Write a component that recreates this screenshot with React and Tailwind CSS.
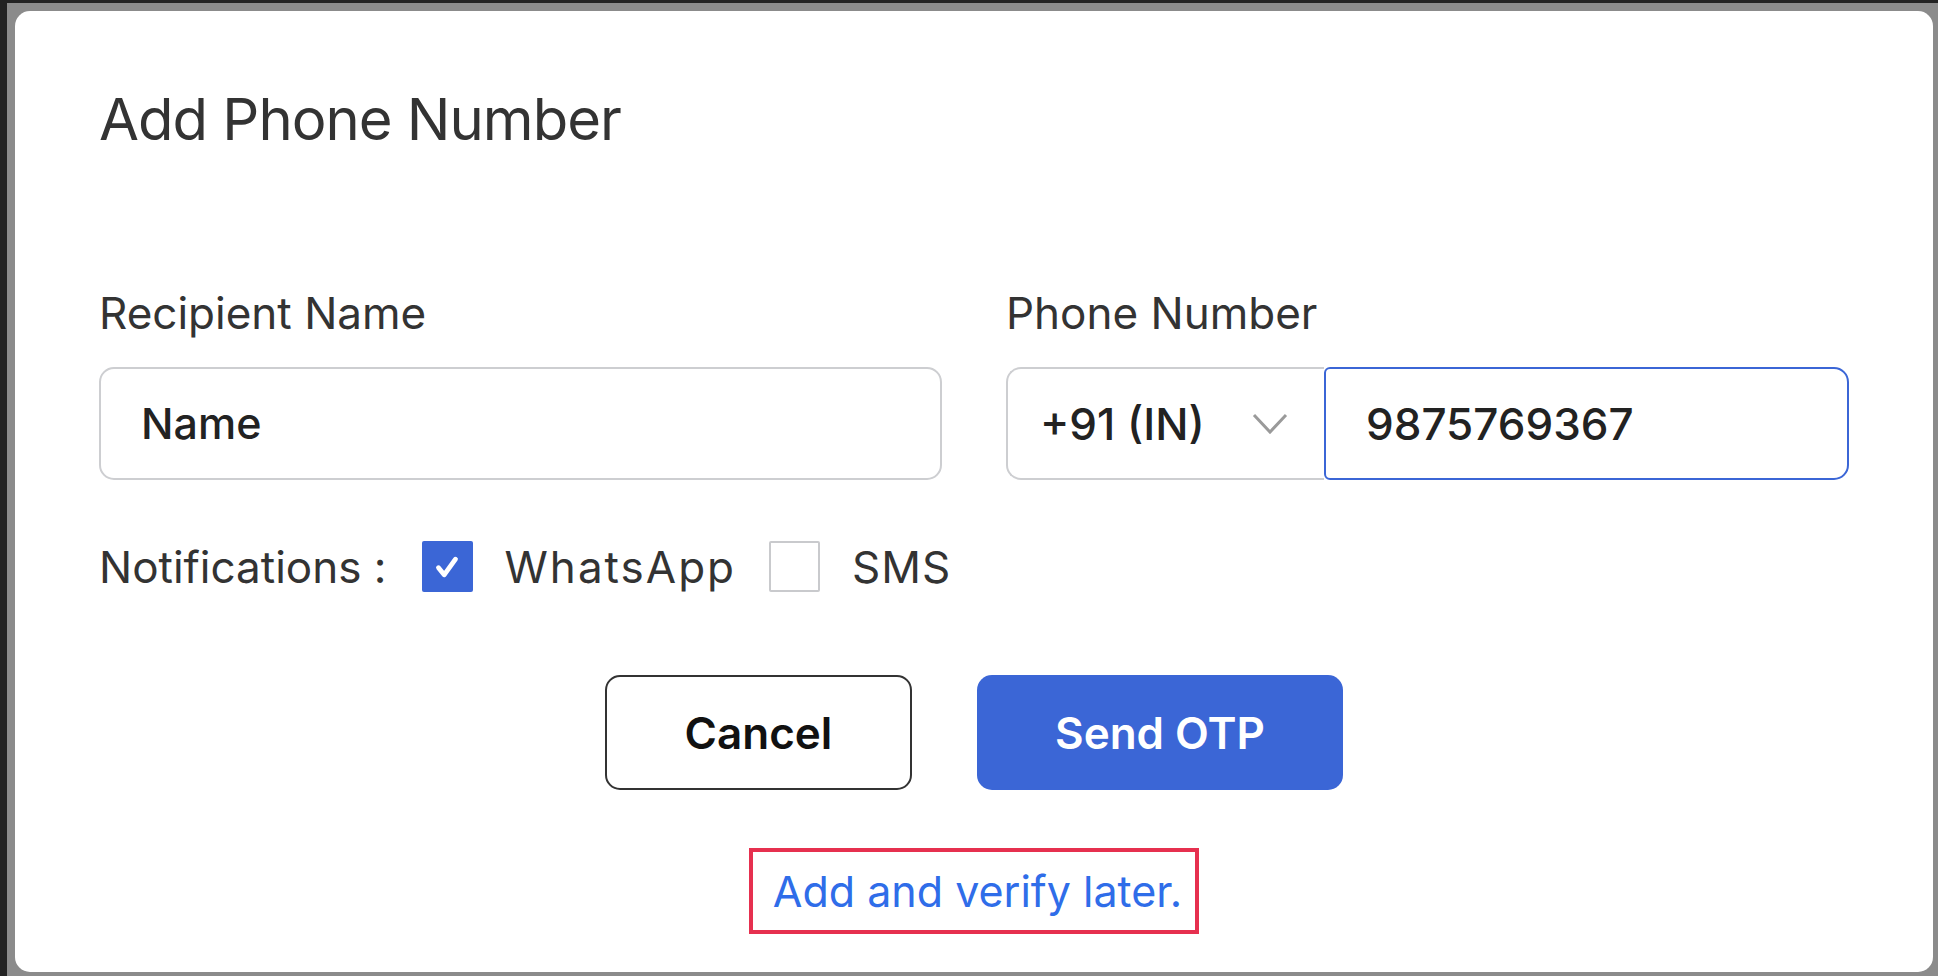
import React from 'react';

function CheckBox({ checked }) {
  if (checked) {
    return (
      <span className="flex h-[51px] w-[51px] shrink-0 items-center justify-center rounded-[2px] bg-[#3b66d6]">
        <svg className="h-[34px] w-[34px]" viewBox="0 0 24 24" fill="none" stroke="white" strokeWidth={3.4} strokeLinecap="round" strokeLinejoin="round">
          <path d="M6 12.5l4 5L18 6.5" />
        </svg>
      </span>
    );
  }
  return <span className="h-[51px] w-[51px] shrink-0 rounded-[2px] border-2 border-[#c9cacd] bg-white" />;
}

export default function App() {
  return (
    <div className="h-[976px] w-full overflow-hidden border-t-[3px] border-l-[7px] border-[#222] bg-[#8b8b8b] font-['Inter',sans-serif]">
      <div className="ml-[8px] mt-[8px] flex h-[961px] w-[1918px] flex-col rounded-[15px] bg-white px-[84px]">
        {/* Title */}
        <h1 className="mt-[72px] text-[58px] font-normal leading-[72px] tracking-[-1px] text-[#333]">Add Phone Number</h1>

        {/* Fields */}
        <div className="mt-[133px] grid grid-cols-2 gap-x-[64px]">
          <div>
            <div className="text-[44px] leading-[50px] text-[#333]">Recipient Name</div>
            <div className="mt-[29px] flex h-[113px] items-center rounded-[15px] border-2 border-[#cdced1] px-[40px]">
              <span className="text-[43px] font-medium text-[#222]">Name</span>
            </div>
          </div>
          <div>
            <div className="text-[44px] leading-[50px] text-[#333]">Phone Number</div>
            <div className="mt-[29px] flex h-[113px]">
              <div className="flex w-[318px] items-center justify-between rounded-l-[15px] border-2 border-r-0 border-[#cdced1] pl-[32px] pr-[36px]">
                <span className="text-[44px] font-medium text-[#222]">+91 (IN)</span>
                <svg className="h-[22px] w-[36px]" viewBox="0 0 36 22" fill="none" stroke="#9a9a9a" strokeWidth={3}>
                  <polyline points="2,2 18,19 34,2" />
                </svg>
              </div>
              <div className="flex flex-1 items-center rounded-r-[15px] rounded-l-[6px] border-2 border-[#3b66d6] px-[40px]">
                <span className="text-[44px] font-medium text-[#222]">9875769367</span>
              </div>
            </div>
          </div>
        </div>

        {/* Notifications */}
        <div className="mt-[61px] flex h-[51px] items-center text-[44px] text-[#333]">
          <span className="mr-[35px]">Notifications :</span>
          <CheckBox checked />
          <span className="ml-[32px] mr-[33px] tracking-[2px]">WhatsApp</span>
          <CheckBox />
          <span className="ml-[32px] tracking-[1px]">SMS</span>
        </div>

        {/* Actions */}
        <div className="mt-[83px] flex justify-center gap-[65px]">
          <button className="h-[115px] w-[307px] rounded-[15px] border-2 border-[#333] bg-white text-[44px] font-semibold text-[#111]">
            Cancel
          </button>
          <button className="h-[115px] w-[366px] rounded-[15px] bg-[#3b66d6] text-[44px] font-semibold text-white">
            Send OTP
          </button>
        </div>

        <div className="mt-[58px] flex justify-center">
          <a href="#" className="flex h-[86px] items-center border-4 border-[#e6304f] pl-[20px] pr-[13px] text-[43px] text-[#2f6de9]">
            Add and verify later.
          </a>
        </div>
      </div>
    </div>
  );
}
